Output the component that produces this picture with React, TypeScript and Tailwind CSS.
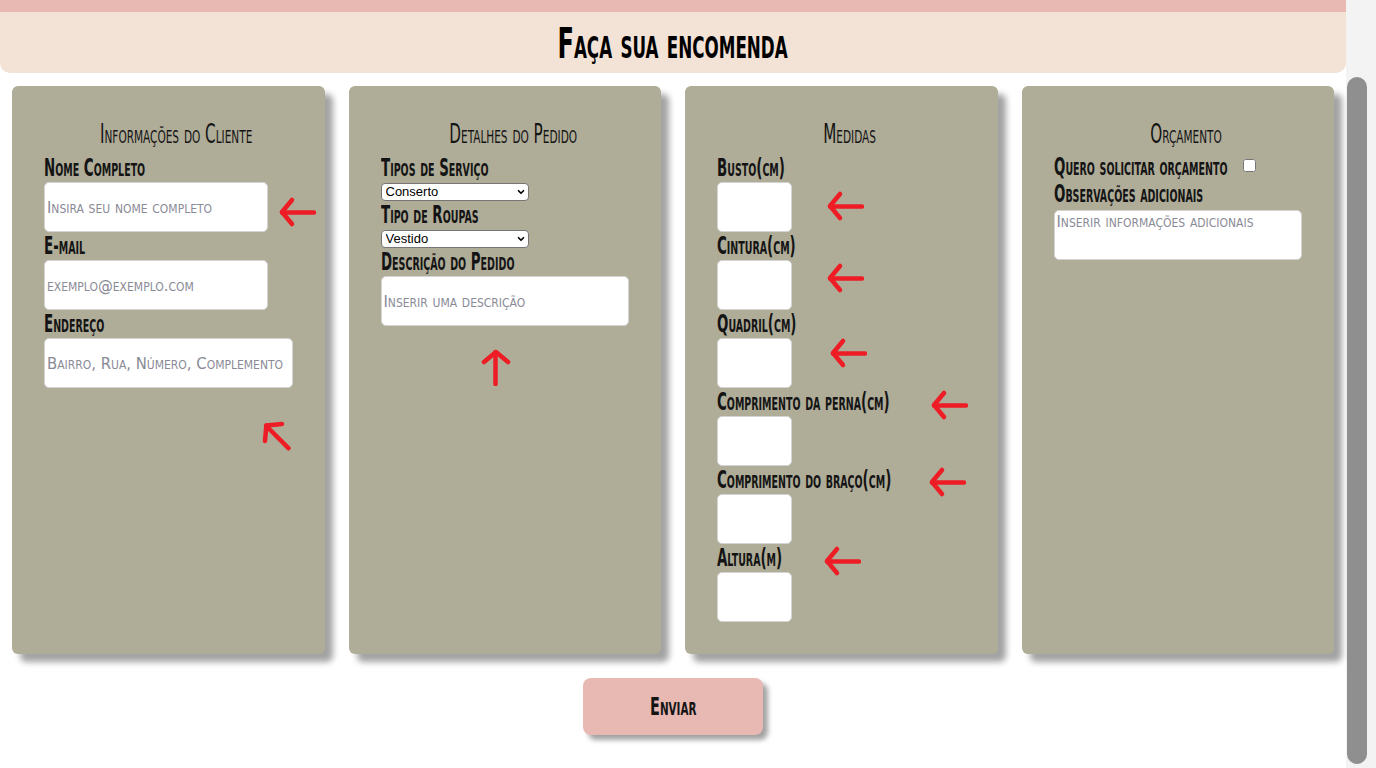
import { ChevronDown } from 'lucide-react';

// hand-drawn red arrow, points left by default
function Arrow({ className }: { className: string }) {
  return (
    <svg
      width="38"
      height="32"
      viewBox="0 0 38 32"
      className={`absolute ${className}`}
      fill="none"
      stroke="#ee1c25"
      strokeWidth="4.5"
      strokeLinecap="round"
      strokeLinejoin="round"
    >
      <path d="M36 16.5 H4" />
      <path d="M14 4 L4 16 L14 28" />
    </svg>
  );
}

function Label({ children }: { children: React.ReactNode }) {
  return (
    <div className="h-[28px] whitespace-nowrap text-[24px] font-bold leading-[28px] text-[#141414]">
      <span className="inline-block origin-left scale-x-[0.62]">{children}</span>
    </div>
  );
}

function Heading({ children }: { children: React.ReactNode }) {
  return (
    <h3 className="mb-1 h-8 whitespace-nowrap text-center text-[26px] leading-8 text-[#141414]">
      <span className="inline-block scale-x-[0.65]">{children}</span>
    </h3>
  );
}

function Field({ placeholder, width }: { placeholder?: string; width: string }) {
  return (
    <input
      type="text"
      placeholder={placeholder}
      className={`block h-[50px] ${width} rounded-[5px] border border-[#d4d4d4] bg-white px-[2px] text-[16.5px] placeholder:text-[#8a8a96] focus:outline-none`}
    />
  );
}

function Select({ value }: { value: string }) {
  return (
    <div className="relative mt-px h-[18px] w-[148px]">
      <select
        defaultValue={value}
        className="block h-[18px] w-full appearance-none rounded-[4px] border border-[#767676] bg-white pl-[4px] font-['Liberation_Sans',Arial,sans-serif] text-[13px] leading-[16px] text-black [font-variant-caps:normal]"
      >
        <option>{value}</option>
      </select>
      <ChevronDown className="pointer-events-none absolute right-[3px] top-[4px] h-[10px] w-[10px] text-black" strokeWidth={4} />
    </div>
  );
}

const cardClass = 'relative h-[568px] min-w-0 flex-1 basis-0 rounded-[6px] bg-[#afac98] pl-8 pr-4 pt-8 shadow-[8px_8px_6px_#a3a3a3]';

export default function App() {
  return (
    <div className="flex h-screen overflow-hidden bg-white font-['DejaVu_Sans_Condensed','Liberation_Sans_Narrow',sans-serif] [font-variant-caps:small-caps]">
      <div className="min-w-0 flex-1">
        {/* Header */}
        <div className="h-3 bg-[#e8b8b2]" />
        <div className="flex h-[61px] items-center justify-center rounded-b-[10px] bg-[#f3e3d6] pt-[2px]">
          <h1 className="whitespace-nowrap text-[43px] font-bold leading-none text-black">
            <span className="inline-block scale-x-[0.62]">Faça sua encomenda</span>
          </h1>
        </div>

        {/* Cards */}
        <div className="mt-[13px] flex gap-6 px-3">
          <div className={cardClass}>
            <Heading>Informações do Cliente</Heading>
            <Label>Nome Completo</Label>
            <Field placeholder="Insira seu nome completo" width="w-[224px]" />
            <Label>E-mail</Label>
            <Field placeholder="exemplo@exemplo.com" width="w-[224px]" />
            <Label>Endereço</Label>
            <Field placeholder="Bairro, Rua, Número, Complemento" width="w-[249px]" />
            <Arrow className="left-[266px] top-[110px]" />
            <Arrow className="left-[246px] top-[334px] rotate-45" />
          </div>

          <div className={cardClass}>
            <Heading>Detalhes do Pedido</Heading>
            <Label>Tipos de Serviço</Label>
            <Select value="Conserto" />
            <Label>Tipo de Roupas</Label>
            <Select value="Vestido" />
            <Label>Descrição do Pedido</Label>
            <Field placeholder="Inserir uma descrição" width="w-[248px]" />
            <Arrow className="left-[128px] top-[265px] rotate-90" />
          </div>

          <div className={cardClass}>
            <Heading>Medidas</Heading>
            <Label>Busto(cm)</Label>
            <Field width="w-[75px]" />
            <Label>Cintura(cm)</Label>
            <Field width="w-[75px]" />
            <Label>Quadril(cm)</Label>
            <Field width="w-[75px]" />
            <Label>Comprimento da perna(cm)</Label>
            <Field width="w-[75px]" />
            <Label>Comprimento do braço(cm)</Label>
            <Field width="w-[75px]" />
            <Label>Altura(m)</Label>
            <Field width="w-[75px]" />
            <Arrow className="left-[141px] top-[104px]" />
            <Arrow className="left-[141px] top-[176px]" />
            <Arrow className="left-[144px] top-[251px]" />
            <Arrow className="left-[245px] top-[303px]" />
            <Arrow className="left-[243px] top-[380px]" />
            <Arrow className="left-[138px] top-[459px]" />
          </div>

          <div className={cardClass}>
            <Heading>Orçamento</Heading>
            <div className="flex h-[26px] items-center">
              <div className="w-[189px] shrink-0 whitespace-nowrap text-[24px] font-bold leading-[26px] text-[#141414]">
                <span className="inline-block origin-left scale-x-[0.62]">Quero solicitar orçamento</span>
              </div>
              <input type="checkbox" className="-mt-[4px] h-[13px] w-[13px]" />
            </div>
            <Label>Observações adicionais</Label>
            <textarea
              placeholder="Inserir informações adicionais"
              className="mt-[2px] block h-[50px] w-[248px] resize-none rounded-[5px] border border-[#d4d4d4] bg-white px-[2px] text-[16.5px] leading-[22px] placeholder:text-[#8a8a96] focus:outline-none"
            />
          </div>
        </div>

        {/* Submit */}
        <div className="mt-6 flex justify-center">
          <button className="h-[57px] w-[180px] rounded-[8px] bg-[#e8b8b2] text-[25px] font-bold text-[#141414] shadow-[5px_5px_5px_#a3a3a3]">
            <span className="inline-block scale-x-[0.64]">Enviar</span>
          </button>
        </div>
      </div>

      {/* scrollbar */}
      <div className="w-[30px] bg-[#f3f3f3] pl-px pt-[77px]">
        <div className="h-[687px] w-[20px] rounded-full bg-[#8f8f8f]" />
      </div>
    </div>
  );
}
